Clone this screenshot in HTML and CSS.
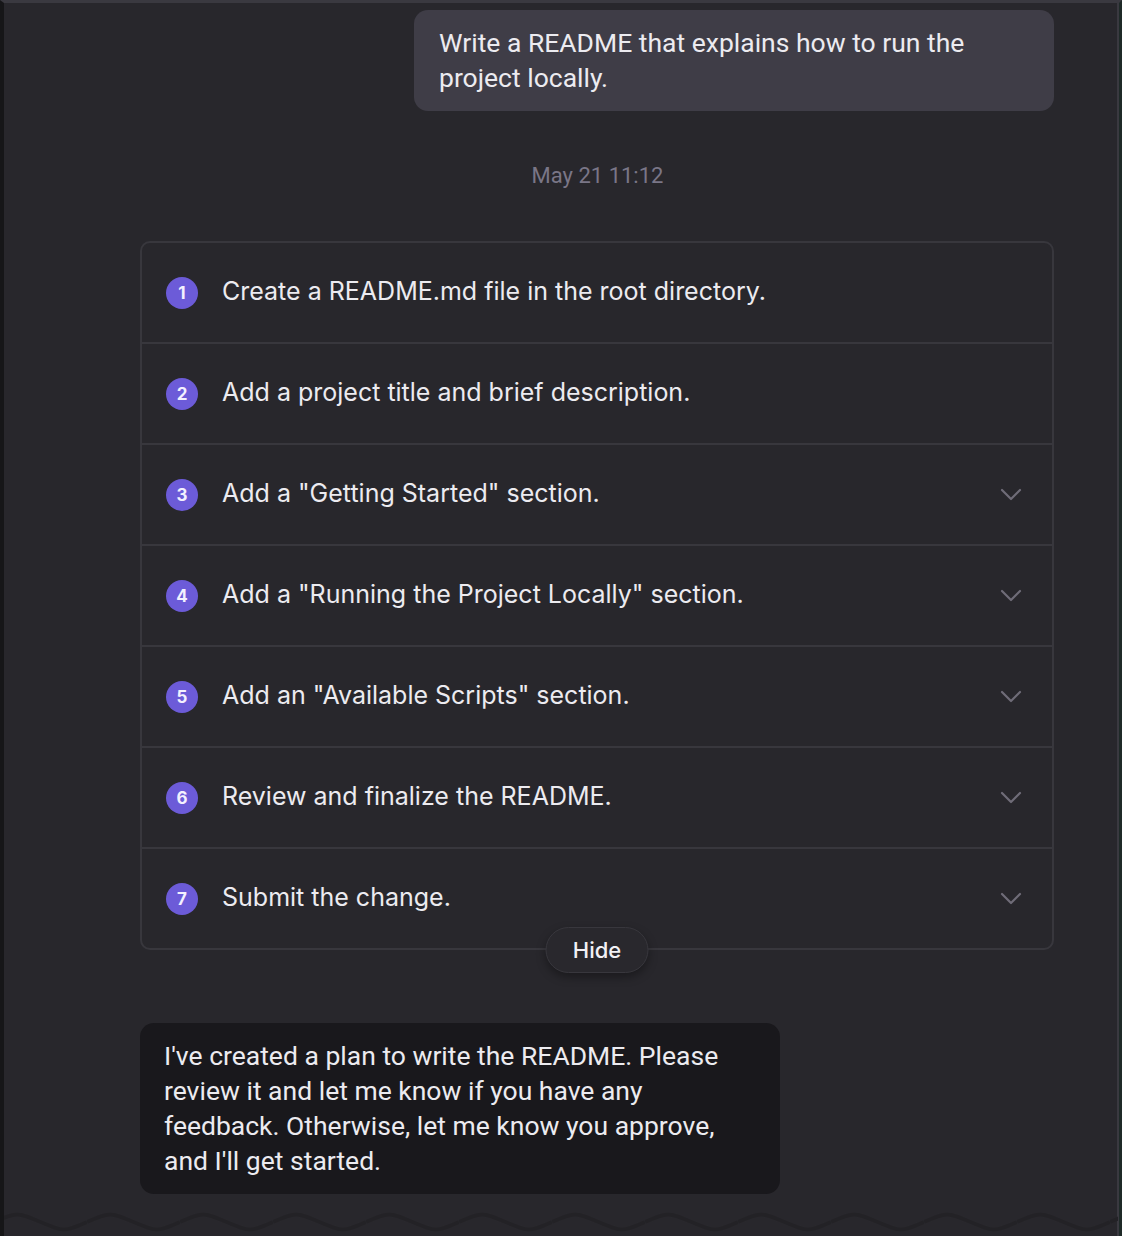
FILE: index.html
```html
<!DOCTYPE html>
<html>
<head>
<meta charset="utf-8">
<link rel="stylesheet" href="styles.css">
</head>
<body>
<div class="frame">
  <div class="column">
    <div class="user-row">
      <div class="user-bubble">Write a README that explains how to run the project locally.</div>
    </div>
    <div class="timestamp">May 21 11:12</div>
    <div class="plan">
      <div class="step"><span class="num">1</span><span class="label">Create a README.md file in the root directory.</span></div>
      <div class="step"><span class="num">2</span><span class="label">Add a project title and brief description.</span></div>
      <div class="step"><span class="num">3</span><span class="label">Add a "Getting Started" section.</span><svg class="chev" viewBox="0 0 22 14" width="22" height="14"><path d="M2 2 L11 11 L20 2" fill="none" stroke="currentColor" stroke-width="2.2" stroke-linecap="round" stroke-linejoin="round"/></svg></div>
      <div class="step"><span class="num">4</span><span class="label">Add a "Running the Project Locally" section.</span><svg class="chev" viewBox="0 0 22 14" width="22" height="14"><path d="M2 2 L11 11 L20 2" fill="none" stroke="currentColor" stroke-width="2.2" stroke-linecap="round" stroke-linejoin="round"/></svg></div>
      <div class="step"><span class="num">5</span><span class="label">Add an "Available Scripts" section.</span><svg class="chev" viewBox="0 0 22 14" width="22" height="14"><path d="M2 2 L11 11 L20 2" fill="none" stroke="currentColor" stroke-width="2.2" stroke-linecap="round" stroke-linejoin="round"/></svg></div>
      <div class="step"><span class="num">6</span><span class="label">Review and finalize the README.</span><svg class="chev" viewBox="0 0 22 14" width="22" height="14"><path d="M2 2 L11 11 L20 2" fill="none" stroke="currentColor" stroke-width="2.2" stroke-linecap="round" stroke-linejoin="round"/></svg></div>
      <div class="step"><span class="num">7</span><span class="label">Submit the change.</span><svg class="chev" viewBox="0 0 22 14" width="22" height="14"><path d="M2 2 L11 11 L20 2" fill="none" stroke="currentColor" stroke-width="2.2" stroke-linecap="round" stroke-linejoin="round"/></svg></div>
      <button class="hide">Hide</button>
    </div>
    <div class="agent-bubble">I've created a plan to write the README. Please review it and let me know if you have any feedback. Otherwise, let me know you approve, and I'll get started.</div>
  </div>
  <svg class="wave" width="1114" height="30" viewBox="0 0 1114 30" preserveAspectRatio="none">
    <defs>
      <pattern id="w" x="-10" y="0" width="93" height="30" patternUnits="userSpaceOnUse">
        <path d="M0 16 C 23 6, 23 6, 46.5 16 S 70 26, 93 16" fill="none" stroke="#232226" stroke-width="4"/>
      </pattern>
    </defs>
    <rect x="0" y="0" width="1114" height="30" fill="url(#w)"/>
  </svg>
</div>
</body>
</html>
```

FILE: styles.css
```css
html, body {
  margin: 0;
  padding: 0;
  background: #28272c;
  height: 1236px;
  overflow: hidden;
}

.frame {
  position: relative;
  box-sizing: border-box;
  width: 1122px;
  height: 1236px;
  border-left: 4px solid #161618;
  border-top: 3px solid #3a3940;
  border-right: 3px solid #1f2a28;
  box-shadow: inset -2px 0 0 #3a3940;
  background: #28272c;
  font-family: Roboto, "Open Sans", sans-serif;
  color: #ecebf0;
}

.column {
  width: 914px;
  margin-left: 136px;
  display: flex;
  flex-direction: column;
}

.user-row {
  display: flex;
  justify-content: flex-end;
  margin-top: 7px;
}

.user-bubble {
  box-sizing: border-box;
  width: 640px;
  background: #3f3d47;
  border-radius: 14px;
  padding: 15px 25px 16px;
  font-size: 26.5px;
  line-height: 35px;
}

.timestamp {
  text-align: center;
  margin-top: 50px;
  font-size: 22px;
  line-height: 30px;
  color: #7a7687;
  padding-left: 1px;
}

.plan {
  position: relative;
  margin-top: 50px;
  border: 2px solid #38373d;
  border-radius: 10px;
  display: flex;
  flex-direction: column;
}

.step {
  height: 99px;
  display: flex;
  align-items: center;
  padding-left: 24px;
  padding-right: 30px;
  font-family: Inter, Roboto, sans-serif;
}

.step + .step {
  border-top: 2px solid #38373d;
}

.num {
  width: 32px;
  height: 32px;
  border-radius: 50%;
  background: #6c5bd8;
  color: #f3f1ff;
  font-size: 17px;
  font-weight: 700;
  display: flex;
  align-items: center;
  justify-content: center;
  flex: none;
}

.label {
  margin-left: 24px;
  margin-bottom: 3px;
  font-size: 25px;
  color: #ecebf0;
  flex: 1;
}

.chev {
  color: #6f6c78;
  flex: none;
}

.hide {
  position: absolute;
  left: 50%;
  bottom: -25px;
  transform: translateX(-50%);
  height: 46px;
  width: 103px;
  border-radius: 23px;
  border: 1px solid #38373d;
  background: #29282d;
  color: #f2f1f5;
  font-family: Inter, Roboto, sans-serif;
  font-size: 22px;
  font-weight: 500;
  box-shadow: 0 4px 10px rgba(0, 0, 0, 0.35);
  padding: 0;
}

.agent-bubble {
  box-sizing: border-box;
  width: 640px;
  margin-top: 73px;
  background: #19181c;
  border-radius: 14px;
  padding: 15px 24px 16px;
  font-size: 26.5px;
  line-height: 35px;
}

.wave {
  position: absolute;
  left: 0;
  bottom: 0;
  display: block;
}
```
